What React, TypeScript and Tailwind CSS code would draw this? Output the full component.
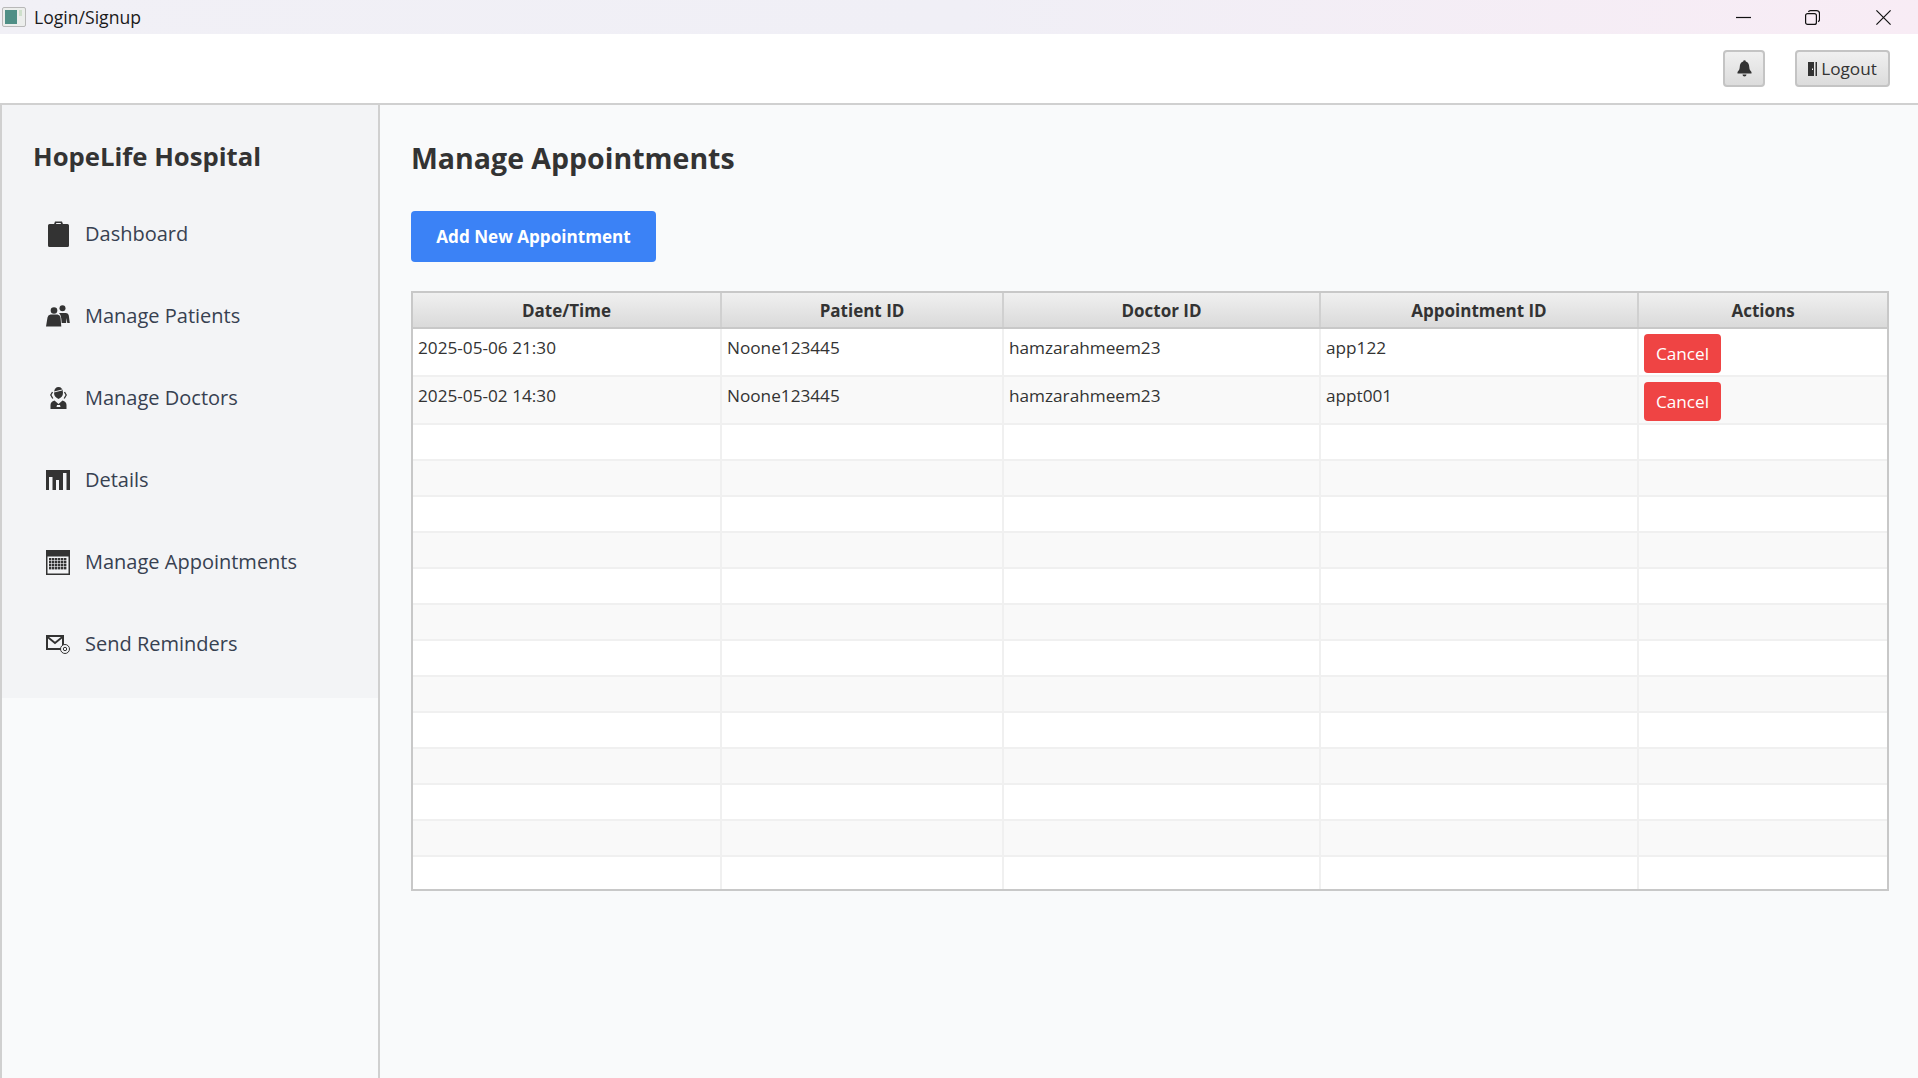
const font = "font-['Open_Sans',sans-serif]";

const rows = [
  { date: "2025-05-06 21:30", patient: "Noone123445", doctor: "hamzarahmeem23", appt: "app122" },
  { date: "2025-05-02 14:30", patient: "Noone123445", doctor: "hamzarahmeem23", appt: "appt001" },
];

const columns = "grid grid-cols-[309px_282px_317px_318px_1fr]";

function ClipboardIcon() {
  return (
    <svg width="21" height="26" viewBox="0 0 21 26" fill="#333">
      <path d="M6 3.200 7 .5h7l1 2.700h-1.800l-.6-1.200H8.400L7.800 3.200z" />
      <path d="M1.500 3h18a1.500 1.500 0 0 1 1.500 1.500V24.500a1.500 1.500 0 0 1-1.500 1.500h-18A1.500 1.500 0 0 1 0 24.500V4.500A1.500 1.500 0 0 1 1.500 3z" />
    </svg>
  );
}

function PatientsIcon() {
  return (
    <svg width="24" height="22" viewBox="0 0 24 22" fill="#333">
      <circle cx="16.500" cy="3.300" r="3" />
      <circle cx="8" cy="5.500" r="3.300" />
      <path d="M0 21.500 1.500 12.500q.4-2.500 3-3h7q2.600.5 3 3l.8 9z" />
      <path d="M13 8h7q2.500.4 2.800 2.500l1 7.500h-2.500l-.9-5-.3 5h-4.400l-.5-5q-.5-3.500-2.200-5z" />
    </svg>
  );
}

function DoctorIcon() {
  return (
    <svg width="17" height="22" viewBox="0 0 17 22" fill="#333">
      <path d="M4 5.500Q4.500 0 8.500 0t4.500 5.500Q13 10 8.500 12 4 10 4 5.500z" />
      <path d="M.5 22v-4q0-3.500 4-4.500l4 3.500 4-3.500q4 1 4 4.500v4z" />
      <path d="M2.500 5 .8 8l2 3.500M14.500 5l1.700 3-2 3.500" fill="none" stroke="#333" strokeWidth="1.300" />
      <path d="M4 5 12 3" stroke="#f3f4f6" strokeWidth="1" />
      <path d="M7 18h3l.5 2h-4z" fill="#f3f4f6" />
    </svg>
  );
}

function ChartIcon() {
  return (
    <svg width="24" height="20" viewBox="0 0 24 20" fill="#333">
      <path d="M0 0h24v20H0z" />
      <path d="M3 7h3.500v13H3zM10 10h3v10h-3zM17 3h3.500v17H17z" fill="#f3f4f6" />
    </svg>
  );
}

function CalendarIcon() {
  const cells = [];
  for (let y = 0; y < 4; y++) {
    for (let x = 0; x < 6; x++) {
      cells.push(<rect key={`${x}-${y}`} x={3 + x * 3} y={8 + y * 3} width="2.400" height="2.400" />);
    }
  }
  return (
    <svg width="24" height="25" viewBox="0 0 24 25" fill="#333">
      <path d="M0 0h24v25H0zM1.500 6.500v17h21v-17z" fillRule="evenodd" />
      {cells}
    </svg>
  );
}

function MailIcon() {
  return (
    <svg width="24" height="19" viewBox="0 0 24 19" fill="none" stroke="#333">
      <path d="M1 1h16v13H1z" strokeWidth="2" />
      <path d="m1 1.500 8 6.500 8-6.500" strokeWidth="1.800" />
      <circle cx="19" cy="14" r="4.500" fill="#f3f4f6" strokeWidth="1" />
      <circle cx="19" cy="14" r="1.700" strokeWidth="1" />
    </svg>
  );
}

function BellIcon() {
  return (
    <svg width="15" height="17" viewBox="0 0 15 17" fill="#333">
      <path d="M6.200 1.500a1.300 1.300 0 0 1 2.600 0c2.500.7 3.300 2.800 3.400 5 .1 2.600.8 4 2.300 5.500v1.500H.5V12c1.500-1.500 2.200-2.900 2.300-5.500.1-2.200.9-4.300 3.400-5z" />
      <path d="M5.500 14.500h4a2 2 0 0 1-4 0z" />
    </svg>
  );
}

function DoorIcon() {
  return (
    <svg width="9" height="14" viewBox="0 0 9 14" fill="#333" className="mr-[4px]">
      <path d="M0 0h6v14H0z" />
      <path d="M7.500 0H9v14H7.500z" />
      <path d="M4 6.500h1v1.500H4z" fill="#fff" />
    </svg>
  );
}

const nav = [
  { label: "Dashboard", icon: <ClipboardIcon /> },
  { label: "Manage Patients", icon: <PatientsIcon /> },
  { label: "Manage Doctors", icon: <DoctorIcon /> },
  { label: "Details", icon: <ChartIcon /> },
  { label: "Manage Appointments", icon: <CalendarIcon /> },
  { label: "Send Reminders", icon: <MailIcon /> },
];

function TableRow({ row, index }: { row?: (typeof rows)[number]; index: number }) {
  const stripe = index % 2 === 0 ? "bg-white" : "bg-[#f9f9f9]";
  const cell = "border-r-2 border-[#f0f0f0] px-[5px] pt-[7px] last:border-r-0";
  return (
    <div className={`${columns} ${stripe} border-b-2 border-[#f0f0f0] ${row ? "h-[48px]" : "h-[36px]"} text-[17.2px] leading-[24px] text-[#333]`}>
      <div className={cell}>{row?.date}</div>
      <div className={cell}>{row?.patient}</div>
      <div className={cell}>{row?.doctor}</div>
      <div className={cell}>{row?.appt}</div>
      <div className={cell}>
        {row && (
          <button className="-mt-[2px] block h-[39px] w-[77px] rounded-[4px] bg-[#ef4444] text-[17.2px] text-white">Cancel</button>
        )}
      </div>
    </div>
  );
}

export default function App() {
  return (
    <div className={`${font} flex h-[1078px] w-[1918px] flex-col overflow-hidden bg-[#f9fafb] text-[#333]`}>
      <div className="flex h-[34px] shrink-0 items-center bg-gradient-to-r from-[#f1f0f6] via-[#f0eff6] to-[#f8ecf5]">
        <svg width="24" height="20" viewBox="0 0 24 20" className="ml-[2px]">
          <rect x=".5" y=".5" width="23" height="19" rx="1.500" fill="#eceeec" stroke="#b8b8b8" />
          <rect x="3" y="3" width="12" height="14" fill="#4f8f86" />
          <rect x="17" y="3" width="3" height="6" fill="#cfe0cc" />
        </svg>
        <span className="ml-[8px] text-[17.6px] text-[#1a1a1a]">Login/Signup</span>
        <div className="ml-auto flex items-center gap-[54px] pr-[27px]">
          <svg width="15" height="15" viewBox="0 0 15 15" stroke="#111" strokeWidth="1.200">
            <path d="M0 7.500h15" />
          </svg>
          <svg width="15" height="15" viewBox="0 0 15 15" fill="none" stroke="#111" strokeWidth="1.200">
            <rect x=".6" y="3.600" width="10.800" height="10.800" rx="2" />
            <path d="M3.500 2q.4-1.400 2-1.400h6q3 0 3 3v6q0 1.600-1.500 2" />
          </svg>
          <svg width="15" height="15" viewBox="0 0 15 15" stroke="#111" strokeWidth="1.200" className="ml-[2px]">
            <path d="M.4.400l14.200 14.200M14.600.400.400 14.600" />
          </svg>
        </div>
      </div>

      <div className="flex h-[71px] shrink-0 items-center justify-end border-b-2 border-[#d0d0d0] bg-white pr-[28px]">
        <button className="flex h-[37px] w-[42px] items-center justify-center rounded-[4px] border-2 border-[#c4c4c4] bg-gradient-to-b from-[#f0f0f0] to-[#dcdcdc]">
          <BellIcon />
        </button>
        <button className="ml-[30px] flex h-[37px] w-[95px] items-center justify-center rounded-[4px] border-2 border-[#c4c4c4] bg-gradient-to-b from-[#f0f0f0] to-[#dcdcdc] text-[17.2px] text-[#333]">
          <DoorIcon />
          Logout
        </button>
      </div>

      <div className="flex min-h-0 flex-1">
        <aside className="w-[380px] shrink-0 border-x-2 border-[#d0d0d0]">
          <div className="h-[593px] bg-[#f3f4f6] pl-[31px] pt-[34px]">
            <h2 className="text-[25.700px] font-bold leading-[36px] text-[#333]">HopeLife Hospital</h2>
            <nav className="mt-[18px]">
              {nav.map((item) => (
                <div key={item.label} className="flex h-[82px] items-center text-[20px] text-[#374151]">
                  <span className="flex w-[52px] justify-center pr-[2px]">{item.icon}</span>
                  {item.label}
                </div>
              ))}
            </nav>
          </div>
        </aside>

        <main className="flex-1 pl-[31px] pr-[29px] pt-[33px]">
          <h1 className="text-[28.500px] font-bold leading-[40px] text-[#333]">Manage Appointments</h1>
          <button className="mt-[33px] h-[51px] w-[245px] rounded-[4px] bg-[#3b82f6] text-[17.100px] font-bold text-white">
            Add New Appointment
          </button>
          <div className="mt-[29px] h-[600px] overflow-hidden border-2 border-[#c8c8c8] bg-white">
            <div className={`${columns} h-[36px] border-b-2 border-[#c8c8c8] text-[17px] font-bold text-[#333]`}>
              {["Date/Time", "Patient ID", "Doctor ID", "Appointment ID", "Actions"].map((h) => (
                <div
                  key={h}
                  className="flex items-center justify-center border-r-2 border-[#d0d0d0] bg-gradient-to-b from-[#f0f0f0] to-[#dadada] pt-[2px] last:border-r-0"
                >
                  {h}
                </div>
              ))}
            </div>
            {Array.from({ length: 15 }).map((_, i) => (
              <TableRow key={i} index={i} row={rows[i]} />
            ))}
          </div>
        </main>
      </div>
    </div>
  );
}
